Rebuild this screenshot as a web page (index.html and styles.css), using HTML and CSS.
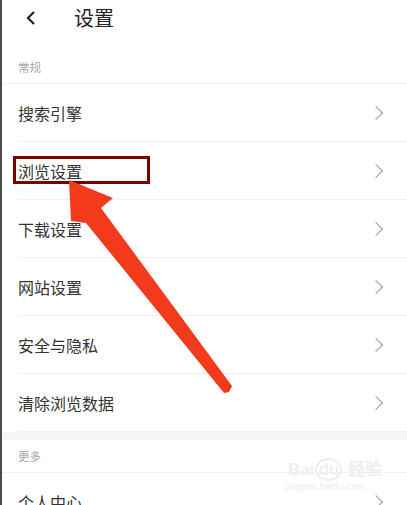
FILE: index.html
```html
<!DOCTYPE html>
<html lang="zh-CN">
<head>
    <meta charset="UTF-8">
    <meta name="viewport" content="width=device-width, initial-scale=1.0">
    <title>设置</title>
    <link rel="stylesheet" href="styles.css">
</head>
<body>
    <div class="page">
        <div class="topbar">
            <svg class="back" width="12" height="16" viewBox="0 0 12 16">
                <path d="M9 2 L3 8 L9 14" fill="none" stroke="#222" stroke-width="2.2"/>
            </svg>
            <div class="title">设置</div>
        </div>

        <div class="section-label first">常规</div>
        <div class="row"><span>搜索引擎</span><i class="chev"></i></div>
        <div class="row"><span>浏览设置</span><i class="chev"></i></div>
        <div class="row"><span>下载设置</span><i class="chev"></i></div>
        <div class="row"><span>网站设置</span><i class="chev"></i></div>
        <div class="row"><span>安全与隐私</span><i class="chev"></i></div>
        <div class="row"><span>清除浏览数据</span><i class="chev"></i></div>

        <div class="gap"></div>

        <div class="section-label">更多</div>
        <div class="row"><span>个人中心</span><i class="chev"></i></div>
    </div>

    <!-- annotation overlay -->
    <div class="mark-box"></div>
    <svg class="arrow" width="407" height="505" viewBox="0 0 407 505">
        <polygon fill="#f23a1c" points="69,180 113,198 101,208 232,386 229,392 224,393 86,223 71,221"/>
    </svg>
    <div class="watermark">
        <div class="wm-big">Bai<span class="wm-du">du</span> 经验</div>
        <div class="wm-small">jingyan.baidu.com</div>
    </div>
</body>
</html>
```

FILE: styles.css
```css
body {
    margin: 0;
    background-color: #fff;
    font-family: "Noto Sans CJK SC", "Noto Sans", sans-serif;
    overflow: hidden;
}

.page {
    border-left: 2px solid #4a4a4a;
    height: 505px;
    overflow: hidden;
}

.topbar {
    display: flex;
    align-items: center;
    height: 36px;
}

.back {
    margin-left: 23px;
}

.title {
    margin-left: 37px;
    font-size: 20px;
    color: #222;
    line-height: 36px;
}

.section-label {
    height: 33px;
    line-height: 32px;
    padding-left: 16px;
    font-size: 11.5px;
    color: #a6a6a6;
    border-bottom: 1px solid #f0f0f0;
    box-sizing: border-box;
}

.section-label.first {
    margin-top: 15px;
}

.row {
    display: flex;
    align-items: center;
    justify-content: space-between;
    height: 57px;
    margin-left: 16px;
    padding-right: 26px;
    border-bottom: 1px solid #f0f0f0;
    font-size: 16px;
    color: #333;
}

.chev {
    width: 9px;
    height: 9px;
    border-top: 1.6px solid #9a9a9a;
    border-right: 1.6px solid #9a9a9a;
    transform: rotate(45deg);
}

.gap {
    height: 8px;
    background-color: #f5f5f5;
}

.mark-box {
    position: absolute;
    left: 13px;
    top: 156px;
    width: 131px;
    height: 22px;
    border: 3px solid #7a0000;
}

.arrow {
    position: absolute;
    left: 0;
    top: 0;
}

.watermark {
    position: absolute;
    left: 288px;
    top: 460px;
    color: #eeeeee;
    font-family: "Liberation Sans", "Noto Sans CJK SC", sans-serif;
}

.wm-big {
    font-size: 17px;
    font-weight: bold;
    line-height: 20px;
}

.wm-du {
    border: 2px solid #eeeeee;
    border-radius: 50%;
    padding: 0 1px;
    margin: 0 1px;
}

.wm-small {
    font-size: 10px;
    line-height: 14px;
    margin-left: -3px;
}
```
